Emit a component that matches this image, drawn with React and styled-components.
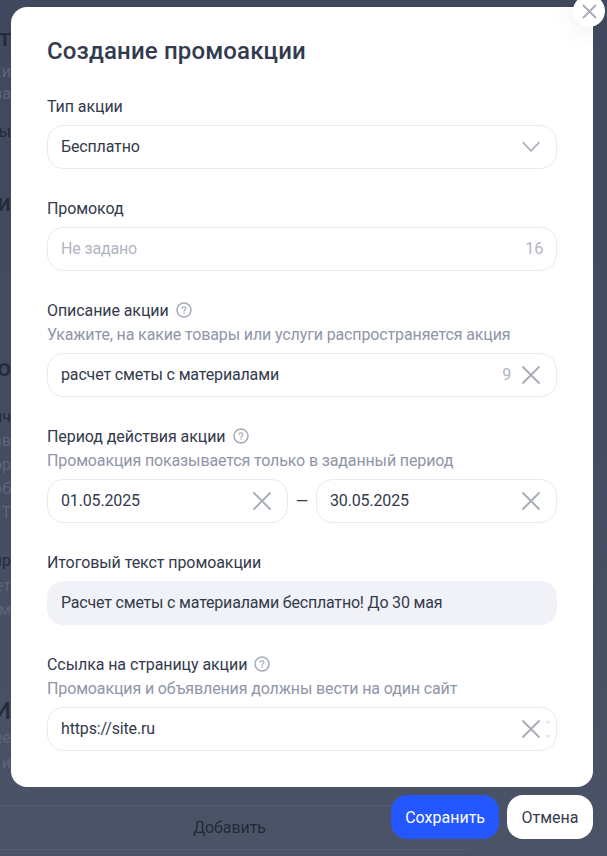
import React from "react";
import styled, { createGlobalStyle } from "styled-components";

const Global = createGlobalStyle`
  html, body { margin: 0; padding: 0; background: #434c60; }
  body { font-family: Roboto, "Noto Sans", "Liberation Sans", sans-serif; }
  * { box-sizing: border-box; }
`;

const Page = styled.div`
  position: relative;
  width: 607px;
  height: 856px;
  overflow: hidden;
  background: linear-gradient(180deg, #3f485c 0%, #434c60 50%, #4b5467 100%);
`;

const Backdrop = styled.div`
  display: flex;
  flex-direction: column;
  height: 100%;
  filter: blur(0.5px);
`;

const Fragment = styled.div`
  width: 11px;
  height: 24px;
  line-height: 24px;
  margin-top: ${(p) => p.$gap}px;
  display: flex;
  justify-content: flex-end;
  white-space: nowrap;
  font-size: ${(p) => (p.$kind === "head" ? 24 : 16)}px;
  font-weight: ${(p) => (p.$kind === "head" ? 500 : 400)};
  color: ${(p) => (p.$kind === "muted" ? "#5d6579" : "#252b3b")};
`;

const BackFooter = styled.div`
  margin-top: auto;
  margin-bottom: 6px;
  width: 470px;
  height: 45px;
  padding-right: 11px;
  display: flex;
  align-items: center;
  justify-content: center;
  border-top: 1px solid #555e71;
  border-bottom: 1px solid #555e71;
  color: #232937;
  font-size: 16px;
  letter-spacing: -0.1px;
`;

const Dialog = styled.div`
  position: absolute;
  top: 7px;
  left: 11px;
  width: 582px;
  display: flex;
  flex-direction: column;
  gap: 8px;
`;

const Modal = styled.div`
  position: relative;
  background: #fff;
  border-radius: 16px;
  padding: 28px 36px 36px;
  display: flex;
  flex-direction: column;
  gap: 28px;
`;

const Close = styled.button`
  position: absolute;
  top: -12px;
  right: -12px;
  width: 32px;
  height: 32px;
  padding: 0;
  border: 0;
  border-radius: 50%;
  background: #fff;
  display: flex;
  align-items: center;
  justify-content: center;
  box-shadow: 0 4px 24px rgba(60, 70, 90, 0.1);
`;

const Title = styled.h1`
  margin: 0;
  font-size: 24px;
  line-height: 32px;
  font-weight: 500;
  letter-spacing: 0.15px;
  color: #333a4e;
`;

const Field = styled.div`
  display: flex;
  flex-direction: column;
`;

const Label = styled.div`
  display: flex;
  align-items: center;
  gap: 7px;
  height: 22px;
  margin-bottom: ${(p) => (p.$hasHint ? 4 : 8)}px;
  font-size: 16px;
  letter-spacing: -0.08px;
  color: #333a4c;
`;

const Hint = styled.div`
  height: 20px;
  line-height: 20px;
  margin-bottom: 8px;
  font-size: 16px;
  letter-spacing: -0.13px;
  color: #8f95a8;
`;

const Input = styled.div`
  position: relative;
  flex: ${(p) => (p.$half ? "1" : "none")};
  height: 44px;
  display: flex;
  align-items: center;
  gap: 8px;
  padding: 0 ${(p) => (p.$pad ? p.$pad : 13)}px 0 13px;
  border: 1px solid ${(p) => (p.$readonly ? "#f0f2f7" : "#e9ebf0")};
  border-radius: 16px;
  background: ${(p) => (p.$readonly ? "#f0f2f7" : "#fff")};
  font-size: 16px;
  letter-spacing: ${(p) => (p.$readonly ? "-0.19px" : "-0.15px")};
  color: #333a4c;
`;

const Value = styled.span`
  flex: 1;
  margin-top: -2px;
  color: ${(p) => (p.$placeholder ? "#b1b5c1" : "#333a4c")};
`;

const Counter = styled.span`
  margin-top: -2px;
  margin-right: 2px;
  color: #b1b5c1;
`;

const Range = styled.div`
  display: flex;
  align-items: center;
`;

const Dash = styled.span`
  width: 28px;
  text-align: center;
  font-size: 16px;
  color: #333a4c;
`;

const Actions = styled.div`
  display: flex;
  justify-content: flex-end;
  gap: 8px;
`;

const Button = styled.button`
  height: 44px;
  padding: 0 ${(p) => (p.$primary ? 14 : 14.5)}px;
  border: 0;
  border-radius: 16px;
  background: ${(p) => (p.$primary ? "#2457ff" : "#fff")};
  color: ${(p) => (p.$primary ? "#fff" : "#333a4c")};
  font-family: inherit;
  font-size: 16px;
`;

const IconSlot = styled.svg`
  flex: none;
  display: block;
`;

const SpinnerSlot = styled(IconSlot)`
  position: absolute;
  top: 9px;
  right: 3px;
`;

const Cross = ({ size = 20, width = 1.8, color = "#a6abb8" }) => (
  <IconSlot width={size} height={size} viewBox="0 0 20 20" fill="none">
    <path d="M2 2L18 18M18 2L2 18" stroke={color} strokeWidth={width} strokeLinecap="round" />
  </IconSlot>
);

const Chevron = () => (
  <IconSlot width="20" height="20" viewBox="0 0 20 20" fill="none">
    <path d="M2 5.5L10 14L18 5.5" stroke="#a6abb8" strokeWidth="1.7" strokeLinecap="round" strokeLinejoin="round" />
  </IconSlot>
);

const Help = () => (
  <IconSlot width="16" height="16" viewBox="0 0 16 16" fill="none">
    <circle cx="8" cy="8" r="7" stroke="#a6abb8" strokeWidth="1.5" />
    <path d="M6.1 6.4C6.2 5.4 7 4.8 8 4.8C9.1 4.8 9.9 5.5 9.9 6.4C9.9 7.7 8 7.8 8 9.2" stroke="#a6abb8" strokeWidth="1.2" strokeLinecap="round" />
    <circle cx="8" cy="11" r="0.8" fill="#a6abb8" />
  </IconSlot>
);

const Spinner = () => (
  <SpinnerSlot width="10" height="24" viewBox="0 0 10 24" fill="none">
    <path d="M3 6L5 4L7 6" stroke="#dcdfe6" strokeWidth="1.2" />
    <path d="M3 18L5 20L7 18" stroke="#dcdfe6" strokeWidth="1.2" />
  </SpinnerSlot>
);

const fragments = [
  ["ит", 26, "head"],
  ["ки", 10, "muted"],
  ["ва", -2, "muted"],
  ["ы", 14, "body"],
  ["ки", 47, "head"],
  ["по", 141, "head"],
  ["ич", 25, "body"],
  ["ив", 0, "muted"],
  ["ор", 0, "muted"],
  ["об", 0, "muted"],
  ["Т", 0, "muted"],
  ["ир", 24, "body"],
  ["ет", 1, "muted"],
  ["им", 0, "muted"],
  ["И", 77, "head"],
  ["ее", 3, "muted"],
  ["и", 1, "muted"],
];

export default function App() {
  return (
    <Page>
      <Global />
      <Backdrop>
        {fragments.map(([text, gap, kind], i) => (
          <Fragment key={i} $gap={gap} $kind={kind}>{text}</Fragment>
        ))}
        <BackFooter>Добавить</BackFooter>
      </Backdrop>
      <Dialog>
        <Modal>
          <Close aria-label="Закрыть"><Cross size={15} width={2.4} /></Close>
          <Title>Создание промоакции</Title>
          <Field>
            <Label>Тип акции</Label>
            <Input $pad={15}><Value>Бесплатно</Value><Chevron /></Input>
          </Field>
          <Field>
            <Label>Промокод</Label>
            <Input $pad={11}><Value $placeholder>Не задано</Value><Counter>16</Counter></Input>
          </Field>
          <Field>
            <Label $hasHint>Описание акции <Help /></Label>
            <Hint>Укажите, на какие товары или услуги распространяется акция</Hint>
            <Input $pad={15}><Value>расчет сметы с материалами</Value><Counter>9</Counter><Cross /></Input>
          </Field>
          <Field>
            <Label $hasHint>Период действия акции <Help /></Label>
            <Hint>Промоакция показывается только в заданный период</Hint>
            <Range>
              <Input $half $pad={15}><Value>01.05.2025</Value><Cross /></Input>
              <Dash>—</Dash>
              <Input $half $pad={15}><Value>30.05.2025</Value><Cross /></Input>
            </Range>
          </Field>
          <Field>
            <Label>Итоговый текст промоакции</Label>
            <Input $readonly><Value>Расчет сметы с материалами бесплатно! До 30 мая</Value></Input>
          </Field>
          <Field>
            <Label $hasHint>Ссылка на страницу акции <Help /></Label>
            <Hint>Промоакция и объявления должны вести на один сайт</Hint>
            <Input $pad={15}><Value>https://site.ru</Value><Cross /><Spinner /></Input>
          </Field>
        </Modal>
        <Actions>
          <Button $primary>Сохранить</Button>
          <Button>Отмена</Button>
        </Actions>
      </Dialog>
    </Page>
  );
}
